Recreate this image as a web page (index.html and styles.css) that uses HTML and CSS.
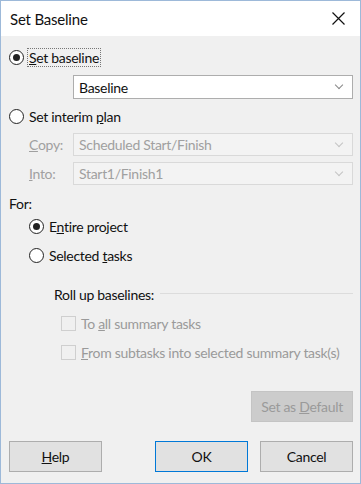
FILE: index.html
```html
<!DOCTYPE html>
<html>
  <head>
    <title>Set Baseline</title>
    <link rel="stylesheet" href="styles.css">
  </head>
  <body>
    <div class="dialog">
      <div class="titlebar">
        <span class="title">Set Baseline</span>
        <svg class="close" width="13" height="13" viewBox="0 0 13 13">
          <path d="M0.5 0.5 L12.5 12.5 M12.5 0.5 L0.5 12.5" stroke="#111" stroke-width="1.2" fill="none"/>
        </svg>
      </div>
      <div class="content">
        <div class="row row-first">
          <span class="radio checked"></span>
          <span class="label focus"><u>S</u>et baseline</span>
        </div>
        <div class="select select-main">
          <span>Baseline</span>
          <span class="chevron"></span>
        </div>

        <div class="row row-interim">
          <span class="radio"></span>
          <span class="label">Set interim <u>p</u>lan</span>
        </div>
        <div class="field field-copy">
          <span class="field-label"><u>C</u>opy:</span>
          <div class="select disabled">
            <span>Scheduled Start/Finish</span>
            <span class="chevron"></span>
          </div>
        </div>
        <div class="field field-into">
          <span class="field-label"><u>I</u>nto:</span>
          <div class="select disabled">
            <span>Start1/Finish1</span>
            <span class="chevron"></span>
          </div>
        </div>

        <div class="row row-for">For:</div>
        <div class="row row-entire indent">
          <span class="radio checked"></span>
          <span class="label">E<u>n</u>tire project</span>
        </div>
        <div class="row row-selected indent">
          <span class="radio"></span>
          <span class="label">Selected <u>t</u>asks</span>
        </div>

        <div class="row row-rollup">
          <span>Roll up baselines:</span>
          <span class="rule"></span>
        </div>
        <div class="row row-check1 check-indent">
          <span class="checkbox"></span>
          <span class="label muted">To <u>a</u>ll summary tasks</span>
        </div>
        <div class="row row-check2 check-indent">
          <span class="checkbox"></span>
          <span class="label muted"><u>F</u>rom subtasks into selected summary task(s)</span>
        </div>

        <div class="default-row">
          <button class="btn btn-default">Set as <u>D</u>efault</button>
        </div>
        <div class="buttons">
          <button class="btn"><u>H</u>elp</button>
          <div class="spacer"></div>
          <button class="btn btn-ok">OK</button>
          <button class="btn">Cancel</button>
        </div>
      </div>
    </div>
  </body>
</html>
```

FILE: styles.css
```css
html, body {
  margin: 0;
  padding: 0;
}
body {
  font-family: Lato, "Open Sans", sans-serif;
  font-size: 14px;
  letter-spacing: -0.3px;
  color: #111;
  background-color: #f0f0f0;
  white-space: nowrap;
}
.dialog {
  width: 361px;
  height: 484px;
  box-sizing: border-box;
  border: 1px solid #9db9d9;
  background-color: #f0f0f0;
}
.titlebar {
  height: 35px;
  background-color: #fff;
  display: flex;
  align-items: center;
  justify-content: space-between;
  padding: 0 15px 0 9px;
}
.title {
  font-size: 15px;
  letter-spacing: -0.2px;
  color: #111;
}
.content {
  padding: 0 7px 0 8px;
}
.row {
  height: 22px;
  display: flex;
  align-items: center;
}
.row-first { margin-top: 10px; }
.row-interim { margin-top: 6px; }
.row-for { margin-top: 7px; }
.row-entire { margin-top: 1px; }
.row-selected { margin-top: 7px; }
.row-rollup { margin-top: 17px; padding-left: 45px; }
.row-check1 { margin-top: 7px; }
.row-check2 { margin-top: 7px; }
.indent { padding-left: 20px; }
.check-indent { padding-left: 52px; }

.radio {
  width: 13px;
  height: 13px;
  border: 1px solid #222;
  border-radius: 50%;
  background-color: #fff;
  position: relative;
  flex-shrink: 0;
  margin-right: 5px;
}
.radio.checked::after {
  content: "";
  position: absolute;
  left: 3px;
  top: 3px;
  width: 7px;
  height: 7px;
  border-radius: 50%;
  background-color: #222;
}
.label.focus {
  outline: 1px dotted #777;
  outline-offset: 0;
  padding: 0 1px;
  margin-left: -1px;
}
.checkbox {
  width: 13px;
  height: 13px;
  border: 1px solid #cfcfcf;
  background-color: #f0f0f0;
  flex-shrink: 0;
  margin-right: 5px;
}
.muted {
  color: #9a9a9a;
}

.select {
  height: 22px;
  box-sizing: border-box;
  border: 1px solid #adadad;
  background-color: #fff;
  display: flex;
  align-items: center;
  justify-content: space-between;
  padding: 0 10px 0 5px;
  flex: 1;
}
.select-main {
  margin: 7px 0 0 64px;
  height: 24px;
}
.select.disabled {
  border-color: #d9d9d9;
  background-color: #f3f3f3;
  color: #a0a0a0;
}
.chevron {
  width: 5px;
  height: 5px;
  border-right: 1px solid #888;
  border-bottom: 1px solid #888;
  transform: rotate(45deg);
  margin-top: -4px;
}
.select.disabled .chevron {
  border-color: #c4c4c4;
}
.field {
  display: flex;
  align-items: center;
  padding-left: 20px;
}
.field-copy { margin-top: 6px; }
.field-into { margin-top: 6px; }
.field-label {
  width: 44px;
  color: #a0a0a0;
}
.field .select {
  height: 23px;
}

.rule {
  flex: 1;
  height: 1px;
  background-color: #dcdcdc;
  margin-left: 6px;
  margin-top: -1px;
}

.btn {
  font-family: inherit;
  font-size: 14px;
  letter-spacing: -0.3px;
  height: 31px;
  border: 1px solid #adadad;
  background-color: #e1e1e1;
  color: #111;
  padding: 0;
  margin: 0;
}
.default-row {
  display: flex;
  justify-content: flex-end;
  margin-top: 28px;
}
.btn-default {
  width: 102px;
  background-color: #cccccc;
  border-color: #c4c4c4;
  color: #9a9a9a;
}
.buttons {
  display: flex;
  margin-top: 19px;
}
.buttons .btn {
  width: 93px;
}
.spacer {
  flex: 1;
}
.btn-ok {
  border-color: #0078d7;
  margin-right: 12px !important;
}
```
